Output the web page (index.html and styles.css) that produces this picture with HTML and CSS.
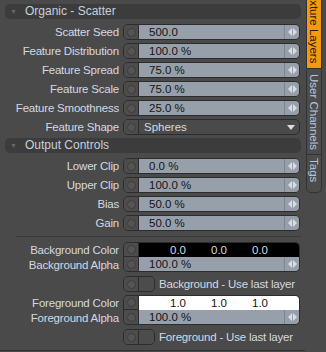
FILE: index.html
```
<!DOCTYPE html>
<html lang="en">
<head>
    <meta charset="UTF-8">
    <meta name="viewport" content="width=device-width, initial-scale=1.0">
    <title>Texture Layers</title>
    <link rel="stylesheet" href="styles.css">
</head>
<body>

<div class="window">
    <div class="panel">
        <div class="group-head"><span class="caret">&#9660;</span>Organic - Scatter</div>

        <div class="row">
            <label>Scatter Seed</label>
            <div class="ctl"><span class="dial"><i></i></span><span class="val">500.0</span><span class="spin"><svg width="9" height="8" viewBox="0 0 9 8"><polygon points="4,0 4,8 0,4"/><polygon points="5,0 5,8 9,4"/></svg></span></div>
        </div>
        <div class="row">
            <label>Feature Distribution</label>
            <div class="ctl"><span class="dial"><i></i></span><span class="val">100.0 %</span><span class="spin"><svg width="9" height="8" viewBox="0 0 9 8"><polygon points="4,0 4,8 0,4"/><polygon points="5,0 5,8 9,4"/></svg></span></div>
        </div>
        <div class="row">
            <label>Feature Spread</label>
            <div class="ctl"><span class="dial"><i></i></span><span class="val">75.0 %</span><span class="spin"><svg width="9" height="8" viewBox="0 0 9 8"><polygon points="4,0 4,8 0,4"/><polygon points="5,0 5,8 9,4"/></svg></span></div>
        </div>
        <div class="row">
            <label>Feature Scale</label>
            <div class="ctl"><span class="dial"><i></i></span><span class="val">75.0 %</span><span class="spin"><svg width="9" height="8" viewBox="0 0 9 8"><polygon points="4,0 4,8 0,4"/><polygon points="5,0 5,8 9,4"/></svg></span></div>
        </div>
        <div class="row">
            <label>Feature Smoothness</label>
            <div class="ctl"><span class="dial"><i></i></span><span class="val">25.0 %</span><span class="spin"><svg width="9" height="8" viewBox="0 0 9 8"><polygon points="4,0 4,8 0,4"/><polygon points="5,0 5,8 9,4"/></svg></span></div>
        </div>
        <div class="row">
            <label>Feature Shape</label>
            <div class="ctl"><span class="dial"><i></i></span><span class="choice">Spheres</span><span class="drop"><svg width="8" height="5" viewBox="0 0 8 5"><polygon points="0,0 8,0 4,5"/></svg></span></div>
        </div>

        <div class="group-head"><span class="caret">&#9660;</span>Output Controls</div>

        <div class="row">
            <label>Lower Clip</label>
            <div class="ctl"><span class="dial"><i></i></span><span class="val">0.0 %</span><span class="spin"><svg width="9" height="8" viewBox="0 0 9 8"><polygon points="4,0 4,8 0,4"/><polygon points="5,0 5,8 9,4"/></svg></span></div>
        </div>
        <div class="row">
            <label>Upper Clip</label>
            <div class="ctl"><span class="dial"><i></i></span><span class="val">100.0 %</span><span class="spin"><svg width="9" height="8" viewBox="0 0 9 8"><polygon points="4,0 4,8 0,4"/><polygon points="5,0 5,8 9,4"/></svg></span></div>
        </div>
        <div class="row">
            <label>Bias</label>
            <div class="ctl"><span class="dial"><i></i></span><span class="val">50.0 %</span><span class="spin"><svg width="9" height="8" viewBox="0 0 9 8"><polygon points="4,0 4,8 0,4"/><polygon points="5,0 5,8 9,4"/></svg></span></div>
        </div>
        <div class="row">
            <label>Gain</label>
            <div class="ctl"><span class="dial"><i></i></span><span class="val">50.0 %</span><span class="spin"><svg width="9" height="8" viewBox="0 0 9 8"><polygon points="4,0 4,8 0,4"/><polygon points="5,0 5,8 9,4"/></svg></span></div>
        </div>

        <div class="divider"></div>

        <div class="row first">
            <label>Background Color</label>
            <div class="ctl top"><span class="dial"><i></i></span><span class="swatch dark"><span>0.0</span><span>0.0</span><span>0.0</span></span></div>
        </div>
        <div class="row second">
            <label>Background Alpha</label>
            <div class="ctl bottom"><span class="dial"><i></i></span><span class="val">100.0 %</span><span class="spin"><svg width="9" height="8" viewBox="0 0 9 8"><polygon points="4,0 4,8 0,4"/><polygon points="5,0 5,8 9,4"/></svg></span></div>
        </div>
        <div class="row check-row">
            <label></label>
            <span class="toggle"><span class="dial"><i></i></span><span class="knob"></span></span>
            <span class="check-text">Background - Use last layer</span>
        </div>

        <div class="row first">
            <label>Foreground Color</label>
            <div class="ctl top"><span class="dial"><i></i></span><span class="swatch light"><span>1.0</span><span>1.0</span><span>1.0</span></span></div>
        </div>
        <div class="row second">
            <label>Foreground Alpha</label>
            <div class="ctl bottom"><span class="dial"><i></i></span><span class="val">100.0 %</span><span class="spin"><svg width="9" height="8" viewBox="0 0 9 8"><polygon points="4,0 4,8 0,4"/><polygon points="5,0 5,8 9,4"/></svg></span></div>
        </div>
        <div class="row check-row">
            <label></label>
            <span class="toggle"><span class="dial"><i></i></span><span class="knob"></span></span>
            <span class="check-text">Foreground - Use last layer</span>
        </div>
    </div>

    <div class="tabs">
        <div class="tab active"><span>Texture Layers</span></div>
        <div class="tab channels"><span>User Channels</span></div>
        <div class="tab tags"><span>Tags</span></div>
    </div>
</div>

</body>
</html>
```

FILE: styles.css
```
body {
    margin: 0;
    padding: 0;
    background-color: #4a4a4a;
    font-family: "Liberation Sans", Arial, sans-serif;
    font-size: 11px;
    color: #d3d9e1;
}
.window {
    display: flex;
    width: 326px;
    height: 352px;
    overflow: hidden;
}
.panel {
    width: 305px;
    height: 350px;
    border-bottom: 1px solid #333;
    display: flex;
    flex-direction: column;
}
.group-head {
    margin: 3px 4px 0 5px;
    height: 15px;
    line-height: 15px;
    background-color: #3c3c3c;
    border-radius: 5px;
    font-size: 12px;
    color: #c6d0dc;
}
.panel > .group-head:first-child {
    margin-top: 4px;
}
.caret {
    display: inline-block;
    width: 15px;
    padding-left: 5px;
    font-size: 7px;
    color: #666;
    vertical-align: top;
}
.group-head + .row {
    margin-top: 5px;
}
.row {
    display: flex;
    align-items: center;
    height: 16px;
    margin-top: 3px;
}
.row label {
    width: 119px;
    padding-right: 4px;
    text-align: right;
    white-space: nowrap;
    font-size: 11.5px;
    letter-spacing: -0.2px;
    flex-shrink: 0;
}
.ctl {
    display: flex;
    width: 175px;
    height: 14px;
    border: 1px solid #2c2c2c;
    border-radius: 5px;
    overflow: hidden;
}
.dial {
    width: 14px;
    background-color: #4c4c4c;
    border-right: 1px solid #2c2c2c;
    display: flex;
    align-items: center;
    justify-content: center;
    flex-shrink: 0;
}
.dial i {
    width: 9px;
    height: 9px;
    border-radius: 50%;
    background-color: #545454;
    border: 1px solid #3c3c3c;
    box-sizing: border-box;
}
.val {
    flex: 1;
    background-color: #97a0aa;
    color: #151515;
    padding-left: 10px;
    line-height: 14px;
    font-size: 11.5px;
}
.spin {
    width: 14px;
    background-color: #97a0aa;
    border-left: 1px solid #7c858f;
    display: flex;
    align-items: center;
    justify-content: center;
}
.spin svg {
    fill: #d9dde2;
}
.choice {
    flex: 1;
    padding-left: 5px;
    line-height: 14px;
    font-size: 11.5px;
    color: #d3d9e1;
}
.drop {
    width: 16px;
    display: flex;
    align-items: center;
    justify-content: center;
}
.drop svg {
    fill: #d9dde2;
}
.divider {
    margin: 5px 4px 0 16px;
    height: 1px;
    background-color: #3a3a3a;
}
.row.first {
    margin-top: 3px;
    height: 15px;
}
.divider + .row.first {
    margin-top: 5px;
}
.row.second {
    margin-top: 0;
    height: 15px;
}
.ctl.top {
    height: 14px;
    border-bottom: none;
    border-bottom-left-radius: 0;
    border-bottom-right-radius: 0;
}
.ctl.bottom {
    height: 14px;
    border-top: none;
    border-top-left-radius: 0;
    border-top-right-radius: 0;
}
.ctl.top .dial {
    border-bottom: 1px solid #2c2c2c;
}
.swatch {
    flex: 1;
    display: flex;
    line-height: 14px;
    font-size: 11.5px;
    padding-left: 31px;
}
.swatch span {
    width: 41px;
}
.swatch.dark {
    background-color: #000;
    color: #d6dbe0;
}
.swatch.light {
    background-color: #fff;
    color: #151515;
}
.check-row {
    margin-top: 4px;
    height: 16px;
}
.toggle {
    display: flex;
    width: 30px;
    height: 14px;
    border: 1px solid #2c2c2c;
    border-radius: 5px;
    overflow: hidden;
}
.knob {
    flex: 1;
    background-color: #4c4c4c;
}
.check-text {
    margin-left: 4px;
    font-size: 11.5px;
    letter-spacing: -0.2px;
    white-space: nowrap;
}
.tabs {
    width: 16px;
    margin-left: 1px;
    display: flex;
    flex-direction: column;
}
.tab {
    writing-mode: vertical-rl;
    border: 1px solid #333;
    border-top: none;
    font-size: 11.5px;
    line-height: 14px;
    overflow: hidden;
    white-space: nowrap;
}
.tab.active {
    height: 68px;
    background-color: #f39a0d;
    color: #2a1e08;
}
.tab.active span {
    margin-top: -12px;
}
.tab.channels {
    height: 85px;
    margin-top: 1px;
    background-color: #4c4c4c;
    color: #b5c6dc;
    padding-top: 4px;
    box-sizing: border-box;
}
.tab.tags {
    height: 38px;
    background-color: #4c4c4c;
    color: #b5c6dc;
    padding-top: 3px;
    box-sizing: border-box;
    border-radius: 0 0 5px 5px;
}
```
